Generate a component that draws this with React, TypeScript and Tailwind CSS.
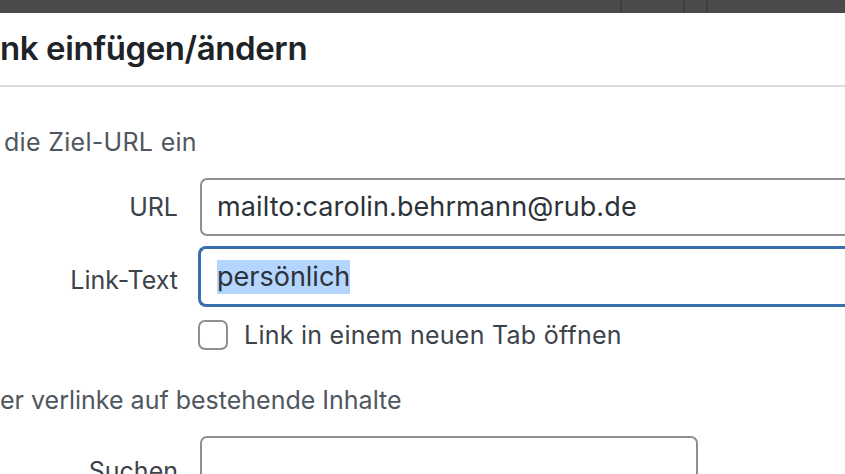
import React from "react";

export default function App() {
  return (
    <div
      className="w-[845px] h-[474px] overflow-hidden bg-white"
      style={{ fontFamily: "Inter, 'Open Sans', sans-serif" }}
    >
      {/* top dark bar */}
      <div className="flex h-[13px] bg-[#4b4b4b]">
        <div className="w-[622px] border-r-2 border-[#3f3f3f]" />
        <div className="w-[63px] border-r-2 border-[#3f3f3f]" />
        <div className="w-[23px] border-r-2 border-[#3f3f3f]" />
        <div className="flex-1" />
      </div>

      {/* header */}
      <div className="h-[74px] border-b-2 border-[#dcdcde] flex items-center">
        <h1 className="text-[33px] leading-none font-semibold tracking-[-0.4px] text-[#1d2327] pb-[2px]">
          nk einfügen/ändern
        </h1>
      </div>

      {/* body */}
      <div className="pt-[40px]">
        <p className="text-[25px] leading-[30px] text-[#50575e] pl-[4px] tracking-[0.3px]">die Ziel-URL ein</p>

        <div className="mt-[21px] flex flex-col gap-[10px]">
          <div className="flex items-center">
            <label className="w-[178px] text-right text-[25px] leading-[30px] text-[#3c434a]">URL</label>
            <div className="ml-[22px] flex-1 h-[58px] rounded-l-[7px] border-2 border-r-0 border-[#8c8f94] flex items-center pl-[15px]">
              <span className="text-[27px] leading-[34px] text-[#2c3338] tracking-[0.1px]">mailto:carolin.behrmann@rub.de</span>
            </div>
          </div>

          <div className="flex items-center">
            <label className="w-[178px] text-right text-[25px] leading-[30px] text-[#3c434a] pt-[6px]">Link-Text</label>
            <div className="ml-[20px] flex-1 h-[61px] rounded-l-[8px] border-[3px] border-r-0 border-[#3a6fad] flex items-center pl-[16px]">
              <span className="text-[27px] text-[#2c3338] bg-[#b4d5fe] leading-[34px]">persönlich</span>
            </div>
          </div>

          <div className="flex items-center pl-[198px] mt-[3px]">
            <div className="w-[30px] h-[30px] rounded-[7px] border-2 border-[#8c8f94] bg-white" />
            <span className="ml-[16px] text-[25px] leading-[30px] text-[#3c434a] tracking-[0.25px]">Link in einem neuen Tab öffnen</span>
          </div>
        </div>

        <p className="mt-[35px] text-[25px] leading-[30px] text-[#50575e]">er verlinke auf bestehende Inhalte</p>

        <div className="mt-[21px] flex items-start">
          <label className="w-[178px] text-right text-[25px] leading-[30px] text-[#3c434a] pt-[20px]">Suchen</label>
          <div className="ml-[22px] w-[498px] h-[60px] rounded-t-[7px] border-2 border-b-0 border-[#8c8f94]" />
        </div>
      </div>
    </div>
  );
}
